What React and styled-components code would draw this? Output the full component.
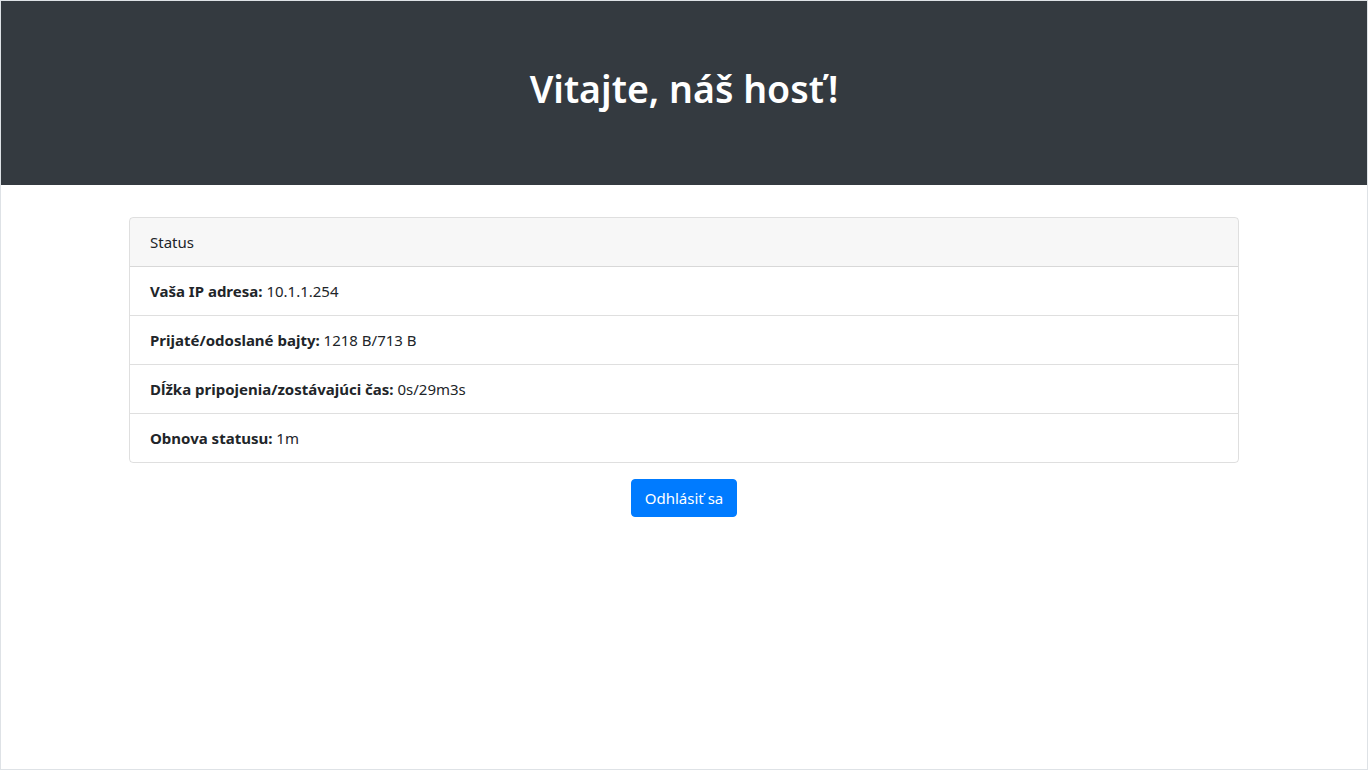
import React from 'react';
import styled, { createGlobalStyle } from 'styled-components';

const GlobalStyle = createGlobalStyle`
    *, *::before, *::after {
        box-sizing: border-box;
    }
    body {
        margin: 0;
        font-family: "Noto Sans", "Open Sans", sans-serif;
        font-size: 15px;
        line-height: 24px;
        color: #212529;
        background-color: #fff;
    }
`
const Page = styled.div`
    min-height: 100vh;
    border: 1px solid #dee2e6;
`
const Jumbotron = styled.header`
    background-color: #343a40;
    padding: 64px 32px;
    margin-bottom: 32px;
    text-align: center;
`
const Title = styled.h1`
    margin: 0 0 8px;
    color: #fff;
    font-size: 37.5px;
    font-weight: 600;
    line-height: 48px;
`
const Container = styled.main`
    max-width: 1140px;
    margin: 0 auto;
    padding: 0 15px;
    display: flex;
    flex-direction: column;
    align-items: center;
`
const Card = styled.section`
    width: 100%;
    border: 1px solid rgba(0, 0, 0, 0.125);
    border-radius: 4px;
    overflow: hidden;
`
const CardHeader = styled.div`
    padding: 12px 20px;
    background-color: rgba(0, 0, 0, 0.03);
    border-bottom: 1px solid rgba(0, 0, 0, 0.125);
`
const List = styled.ul`
    list-style: none;
    margin: 0;
    padding: 0;
`
const Item = styled.li`
    padding: 12px 20px;
    border-bottom: 1px solid rgba(0, 0, 0, 0.125);

    &:last-child {
        border-bottom: none;
    }
`
const Label = styled.strong`
    font-weight: 700;
`
const LogoutButton = styled.button`
    margin-top: 16px;
    padding: 6px 13px;
    font-family: inherit;
    font-size: 15px;
    line-height: 24px;
    color: #fff;
    background-color: #007bff;
    border: 1px solid #007bff;
    border-radius: 4px;
    cursor: pointer;
`

const rows = [
    { label: 'Vaša IP adresa:', value: '10.1.1.254' },
    { label: 'Prijaté/odoslané bajty:', value: '1218 B/713 B' },
    { label: 'Dĺžka pripojenia/zostávajúci čas:', value: '0s/29m3s' },
    { label: 'Obnova statusu:', value: '1m' },
]

function App() {
    return (
        <>
            <GlobalStyle />
            <Page>
                <Jumbotron>
                    <Title>Vitajte, náš hosť!</Title>
                </Jumbotron>
                <Container>
                    <Card>
                        <CardHeader>Status</CardHeader>
                        <List>
                            {rows.map((row) => (
                                <Item key={row.label}>
                                    <Label>{row.label}</Label> {row.value}
                                </Item>
                            ))}
                        </List>
                    </Card>
                    <LogoutButton>Odhlásiť sa</LogoutButton>
                </Container>
            </Page>
        </>
    )
}

export default App
